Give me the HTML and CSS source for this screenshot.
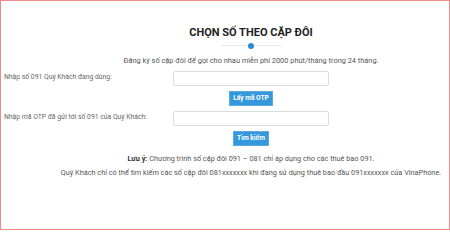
FILE: index.html
```html
<!DOCTYPE html>
<html lang="vi">
<head>
<meta charset="utf-8">
<title>Chọn số theo cặp đôi</title>
<link rel="stylesheet" href="styles.css">
</head>
<body>
<div class="frame">
  <div class="center">
    <h1 class="title">CHỌN SỐ THEO CẶP ĐÔI</h1>
    <div class="divider"><span class="dot"></span></div>
    <p class="subtitle">Đăng ký số cặp đôi để gọi cho nhau miễn phí 2000 phút/tháng trong 24 tháng.</p>
  </div>
  <div class="row row-first">
    <label class="label">Nhập số 091 Quý Khách đang dùng:</label>
    <input class="input" type="text">
  </div>
  <div class="center btn-row">
    <button class="btn btn-otp">Lấy mã OTP</button>
  </div>
  <div class="row">
    <label class="label">Nhập mã OTP đã gửi tới số 091 của Quý Khách:</label>
    <input class="input" type="text">
  </div>
  <div class="center btn-row">
    <button class="btn btn-search">Tìm kiếm</button>
  </div>
  <div class="center notes">
    <p class="note"><b>Lưu ý:</b> Chương trình số cặp đôi 091 – 081 chỉ áp dụng cho các thuê bao 091.</p>
    <p class="note note-2">Quý Khách chỉ có thể tìm kiếm các số cặp đôi 081xxxxxxx khi đang sử dụng thuê bao đầu 091xxxxxxx của VinaPhone.</p>
  </div>
</div>
</body>
</html>
```
FILE: styles.css
```css
html, body {
  margin: 0;
  padding: 0;
  background: #fff;
}
body {
  font-family: Roboto, "Liberation Sans", Arial, sans-serif;
  color: #555;
}
.frame {
  width: 450px;
  height: 230px;
  box-sizing: border-box;
  border: 1px solid #f28a8a;
  overflow: hidden;
}
.center {
  margin-left: 52px;
  text-align: center;
}
.title {
  margin: 24px 0 0;
  font-size: 11px;
  line-height: 16px;
  font-weight: 700;
  color: #222;
  letter-spacing: 0;
}
.divider {
  position: relative;
  width: 61px;
  height: 6px;
  margin: 2px auto 0;
  display: flex;
  align-items: center;
  justify-content: center;
}
.divider::before {
  content: "";
  position: absolute;
  left: 0;
  right: 0;
  top: 2px;
  height: 1px;
  background: #e8e8e8;
}
.dot {
  position: relative;
  width: 6px;
  height: 6px;
  border-radius: 50%;
  background: #2a8ad8;
}
.subtitle {
  margin: 6px 0 0;
  font-size: 7.4px;
  line-height: 12px;
  color: #555;
}
.row {
  display: grid;
  grid-template-columns: 169px 156px;
  margin: 5px 0 0 3px;
}
.row-first {
  margin-top: 4px;
}
.label {
  font-size: 6.8px;
  line-height: 12px;
  color: #666;
}
.input {
  display: block;
  box-sizing: border-box;
  width: 156px;
  height: 15px;
  margin: 0;
  padding: 0 4px;
  border: 1px solid #dcdcdc;
  border-radius: 2px;
  background: #fff;
  outline: none;
}
.btn-row {
  margin-top: 5px;
  height: 15px;
  display: flex;
  justify-content: center;
}
.btn {
  box-sizing: border-box;
  height: 15px;
  margin: 0;
  padding: 0;
  border: 1px solid #5aa9e0;
  background: #3498db;
  color: #fff;
  font-family: Roboto, "Liberation Sans", Arial, sans-serif;
  font-size: 6.6px;
  font-weight: 700;
  line-height: 13px;
  border-radius: 0;
  cursor: pointer;
}
.btn-otp {
  width: 44px;
}
.btn-search {
  width: 36px;
}
.notes {
  margin-top: 7px;
}
.note {
  margin: 0;
  font-size: 7.3px;
  line-height: 12px;
  color: #555;
  white-space: nowrap;
}
.note b {
  color: #333;
}
.note-2 {
  margin-top: 2px;
}
```
